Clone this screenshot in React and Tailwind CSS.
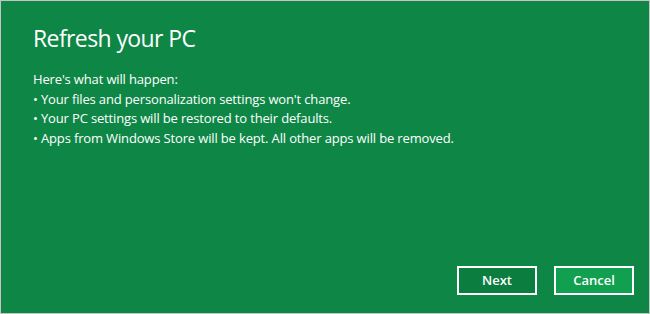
export default function App() {
  return (
    <div
      className="w-[650px] h-[314px] border border-[#c4c4c4] bg-[#0e8746] text-white flex flex-col"
      style={{ fontFamily: '"Open Sans", "Noto Sans", sans-serif' }}
    >
      <div className="pl-[32px] pt-[20px]">
        <h1 className="text-[23px] leading-[34px] font-normal tracking-[-0.6px]">Refresh your PC</h1>
        <div className="mt-[15px] text-[13px] leading-[19.5px] tracking-[-0.15px]">
          <p>Here's what will happen:</p>
          <p>• Your files and personalization settings won't change.</p>
          <p>• Your PC settings will be restored to their defaults.</p>
          <p>• Apps from Windows Store will be kept. All other apps will be removed.</p>
        </div>
      </div>
      <div className="mt-auto flex justify-end gap-[17px] pr-[15px] pb-[18px]">
        <button className="w-[80px] h-[29px] border-2 border-white bg-[#0b7e3f] text-[13px] font-semibold">
          Next
        </button>
        <button className="w-[80px] h-[29px] border-2 border-white bg-[#11a04f] text-[13px] font-semibold">
          Cancel
        </button>
      </div>
    </div>
  );
}
